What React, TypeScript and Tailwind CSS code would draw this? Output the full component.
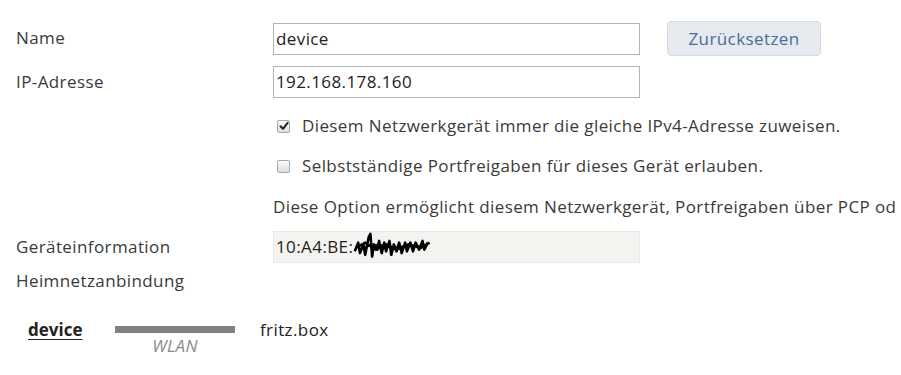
import React from "react";

function Check({ checked }: { checked?: boolean }) {
  return (
    <div className="w-[13px] h-[13px] rounded-[2px] border border-[#a8a8a8] bg-gradient-to-b from-[#fbfbfb] to-[#dedede] flex items-center justify-center shrink-0">
      {checked && (
        <svg width="10" height="10" viewBox="0 0 10 10">
          <path d="M1.5 5.2 L4 7.8 L8.6 1.8" stroke="#222" strokeWidth="2" fill="none" strokeLinecap="round" strokeLinejoin="round" />
        </svg>
      )}
    </div>
  );
}

export default function App() {
  return (
    <div className="w-[901px] h-[375px] bg-white text-[#3a3a3a] text-[17px] tracking-[0.4px] overflow-hidden" style={{ fontFamily: "'Open Sans', Lato, sans-serif" }}>
      <div className="pt-[21px]">
        <div className="flex items-center h-[35px]">
          <div className="w-[257px] ml-[16px] -mt-[1px]">Name</div>
          <div className="w-[367px] h-[32px] border border-[#aab7be] flex items-center px-[2px] text-[#222]">device</div>
          <div className="ml-[27px] w-[154px] h-[35px] rounded-[4px] border border-[#d6dce2] bg-[#e6eaef] text-[#4a6b9e] flex items-center justify-center">Zurücksetzen</div>
        </div>
        <div className="flex items-center h-[32px] mt-[10px]">
          <div className="w-[257px] ml-[16px] -mt-[1px]">IP-Adresse</div>
          <div className="w-[367px] h-[32px] border border-[#aab7be] flex items-center px-[2px] text-[#222]">192.168.178.160</div>
        </div>
        <div className="flex items-center h-[26px] mt-[15px] ml-[277px]">
          <Check checked />
          <span className="ml-[12px] whitespace-nowrap">Diesem Netzwerkgerät immer die gleiche IPv4-Adresse zuweisen.</span>
        </div>
        <div className="flex items-center h-[26px] mt-[14px] ml-[277px]">
          <Check />
          <span className="ml-[12px] whitespace-nowrap">Selbstständige Portfreigaben für dieses Gerät erlauben.</span>
        </div>
        <div className="flex items-center h-[26px] mt-[15px] ml-[273px] whitespace-nowrap">
          Diese Option ermöglicht diesem Netzwerkgerät, Portfreigaben über PCP od
        </div>
        <div className="flex items-center h-[32px] mt-[11px]">
          <div className="w-[257px] ml-[16px]">Geräteinformation</div>
          <div className="w-[367px] h-[32px] border border-[#e8e8e6] bg-[#f4f3f0] flex items-center px-[2px] text-[#222]">
            <span>10:A4:BE:</span>
            <svg width="80" height="34" viewBox="0 0 92 34" className="ml-[0px]">
              <path d="M2 22 L6 12 L8 24 L12 14 L14 26 L18 6 L20 2 L22 28 L24 14 L28 20 L30 10 L33 24 L36 12 L38 22 L42 10 L44 26 L47 14 L50 22 L53 12 L56 24 L60 12 L62 22 L66 12 L69 22 L72 12 L76 20 L80 10 L82 20 L86 12" stroke="#000" strokeWidth="3" fill="none" strokeLinejoin="round" />
              <path d="M3 18 L14 12 L26 20 L38 14 L50 20 L64 14 L78 18 L88 12" stroke="#000" strokeWidth="3" fill="none" />
              <path d="M6 20 L18 16 L30 14 L44 18 L60 16 L76 16" stroke="#000" strokeWidth="2" fill="none" />
            </svg>
          </div>
        </div>
        <div className="flex items-center h-[26px] mt-[5px]">
          <div className="ml-[16px]">Heimnetzanbindung</div>
        </div>
        <div className="flex items-start mt-[24px] h-[40px]">
          <div className="ml-[28px] w-[87px] leading-[24px]">
            <span className="font-bold underline underline-offset-[3px] text-[#222] tracking-[0px]">device</span>
          </div>
          <div className="w-[120px] flex flex-col items-center">
            <div className="w-[120px] h-[7px] bg-[#808080] mt-[8px]"></div>
            <div className="italic text-[#8a8a8a] text-[17px] leading-[20px] mt-[3px]">WLAN</div>
          </div>
          <div className="ml-[25px] text-[#222] leading-[24px]">fritz.box</div>
        </div>
      </div>
    </div>
  );
}
